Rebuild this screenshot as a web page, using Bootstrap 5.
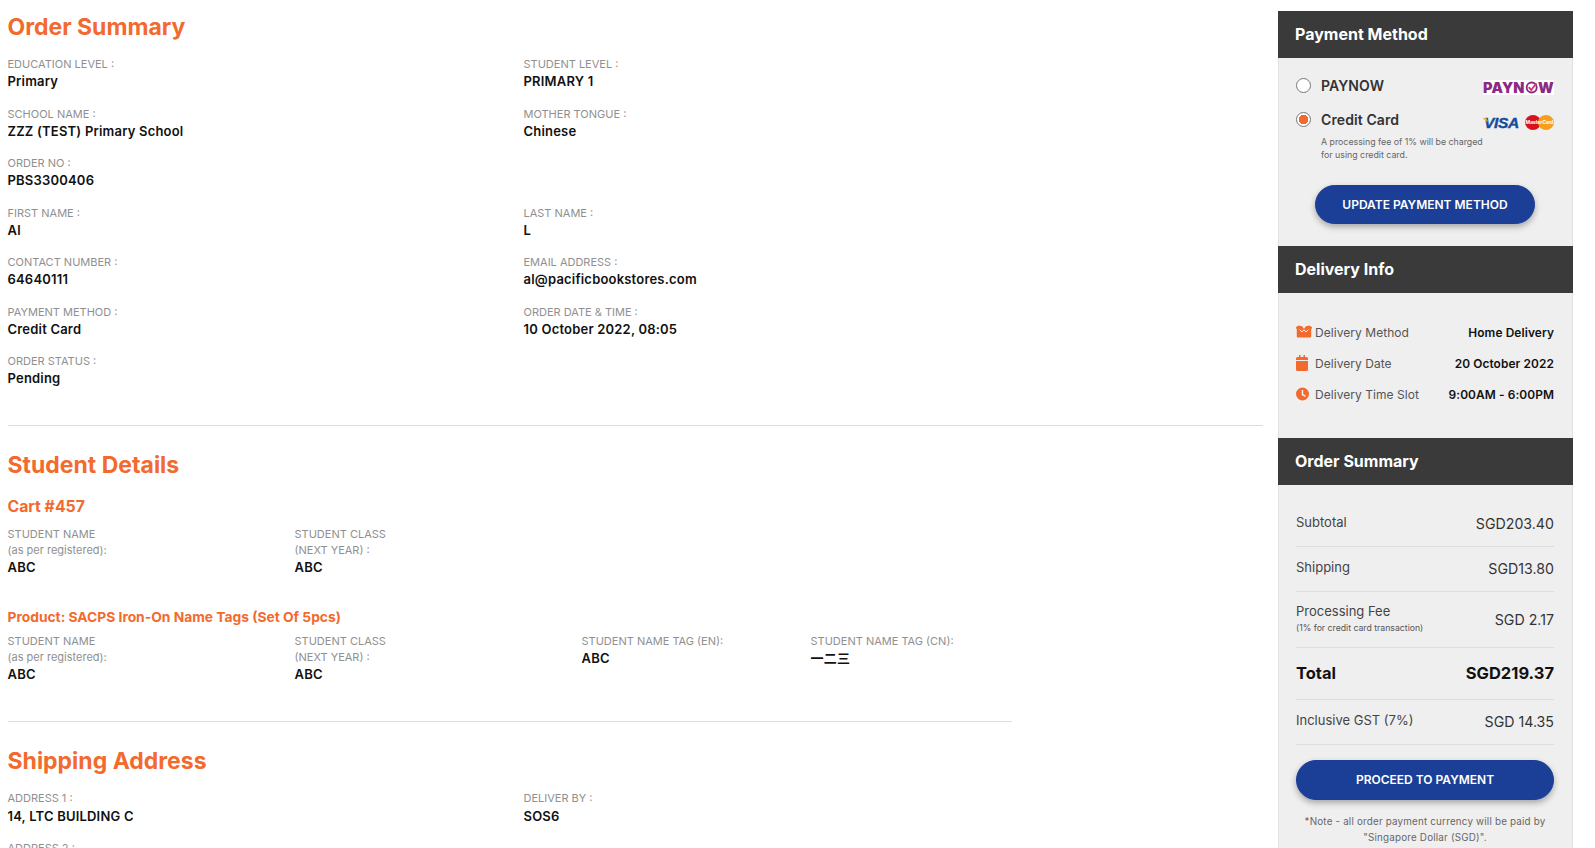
<!DOCTYPE html>
<html lang="en">
<head>
<meta charset="utf-8">
<title>Order Summary</title>
<link href="https://cdn.jsdelivr.net/npm/bootstrap@5.3.0/dist/css/bootstrap.min.css" rel="stylesheet">
<style>
html,body{background:#fff;font-family:Inter,"Noto Sans CJK SC",sans-serif;color:#111}
.page-wrap{width:1595px}
.main-col{width:1263px;padding-left:7.5px;flex:none}
.side-col{width:295px;margin:11px 0 0 15px;flex:none;background:#efefef;border-left:1px solid #e2e2e2;border-right:1px solid #e2e2e2;padding-bottom:20px}
.sec-title{font-size:23px;font-weight:700;color:#f26a2e;line-height:30px;margin:0}
.sub-title{font-weight:700;color:#f26a2e;margin:0}
.cart-title{font-size:15.8px;line-height:20px}
.prod-title{font-size:13.8px;line-height:18px}
.lbl{font-size:11px;line-height:16px;color:#909090}
.val{font-size:13px;line-height:18px;font-weight:600;color:#111;letter-spacing:.2px;margin-top:.4px}
.info-grid{display:grid;grid-template-columns:516px 1fr;grid-auto-rows:49.5px}
.stu-grid{display:grid;grid-template-columns:287px 287px 229px 1fr;width:1004px}
.rule-a{border-top:1px solid #ddd;height:0}
.rule-b{border-top:1px solid #ddd;height:0;width:1004px}
.side-head{background:#3a3a3a;color:#fff;height:47px;margin:0 -1px;padding:0 17px;font-size:16px;font-weight:700;line-height:47px}
.pay-body{height:188px;padding:0 18px 0 17px}
.pay-row{height:33px}
.pay-row .form-check-input{width:15px;height:15px;margin:0;flex:none;border:1px solid #777;background-color:#fff;background-image:none}
.pay-row .form-check-input:checked{background-color:#fff;border-color:#777;background-image:radial-gradient(circle,#f26a2e 0 4.5px,transparent 5px)}
.pay-name{font-size:14px;font-weight:600;color:#333;margin-left:10px;letter-spacing:.1px}
.pay-note{font-size:8.8px;line-height:13px;color:#666;margin:-1px 0 0 25px}
.logo-now{background:#fff;width:71px;height:15px;margin-top:4px;color:#8c2a82;font-size:14.5px;font-weight:900;line-height:15px;display:flex;align-items:center;justify-content:center;letter-spacing:.2px}
.logo-visa{position:relative;font-family:"Liberation Sans",sans-serif;font-style:italic;font-weight:700;font-size:15.500px;line-height:14px;color:#164a9a;letter-spacing:-.3px;-webkit-text-stroke:.4px #164a9a}
.logo-visa::before{content:"";position:absolute;left:-2px;top:2px;width:6px;height:5px;background:#f0a83a;clip-path:polygon(0 0,70% 0,100% 100%)}
.logo-mc{width:29px;height:15px;margin-left:6px;position:relative}
.mc-a,.mc-b{position:absolute;top:0;width:16px;height:15px;border-radius:50%}
.mc-a{left:0;background:#d8121d}
.mc-b{right:0;background:#f79e1b}
.mc-t{position:absolute;left:0;right:0;top:5px;font-size:5px;line-height:5px;text-align:center;color:#fff;font-weight:700;white-space:nowrap;letter-spacing:-.1px}
.act-btn{display:block;background:#1b3f97;color:#fff;border:1px solid #1b3f97;border-radius:20px;font-size:12px;font-weight:600;height:39px;line-height:37px;padding:0;text-align:center;box-shadow:0 3px 6px rgba(0,0,0,.3);text-decoration:none}
.btn-upd{width:220px;margin:24px auto 0 auto}
.btn-go{margin:15px 0 0;height:40px;line-height:37px}
.del-body{height:145px;padding:24px 18px 0 17px}
.del-row{height:31px;font-size:12px}
.del-lbl{color:#555;letter-spacing:.05px}
.del-val{font-size:11.900px;font-weight:600;color:#111;letter-spacing:.1px}
.del-ico{width:16px;height:16px;margin-right:3px;flex:none;fill:#f26a2e;position:relative;top:-1px}
.sum-body{padding:17px 18px 0 17px}
.sum-row{border-bottom:1px solid #dedede;color:#444}
.sum-l{font-size:13px;color:#444;margin-bottom:3px}
.sum-v{font-size:14.2px;color:#333}
.sum-s{font-size:8.7px;line-height:12px;color:#555;display:block}
.tot{font-size:16.5px;font-weight:700;color:#111}
.h-45{height:45px}
.h-56{height:56px}
.h-52{height:52px}
.note-txt{font-size:9.8px;line-height:15.500px;color:#666;text-align:center;margin:14px 0 0;letter-spacing:.2px}
</style>
</head>
<body>
<div class="page-wrap d-flex align-items-start">
  <main class="main-col">
    <h2 class="sec-title pt-2 mt-1">Order Summary</h2>
    <div class="info-grid" style="margin-top:14px">
      <div><div class="lbl">EDUCATION LEVEL :</div><div class="val">Primary</div></div>
      <div><div class="lbl">STUDENT LEVEL :</div><div class="val">PRIMARY 1</div></div>
      <div><div class="lbl">SCHOOL NAME :</div><div class="val">ZZZ (TEST) Primary School</div></div>
      <div><div class="lbl">MOTHER TONGUE :</div><div class="val">Chinese</div></div>
      <div><div class="lbl">ORDER NO :</div><div class="val">PBS3300406</div></div>
      <div></div>
      <div><div class="lbl">FIRST NAME :</div><div class="val">Al</div></div>
      <div><div class="lbl">LAST NAME :</div><div class="val">L</div></div>
      <div><div class="lbl">CONTACT NUMBER :</div><div class="val">64640111</div></div>
      <div><div class="lbl">EMAIL ADDRESS :</div><div class="val">al@pacificbookstores.com</div></div>
      <div><div class="lbl">PAYMENT METHOD :</div><div class="val">Credit Card</div></div>
      <div><div class="lbl">ORDER DATE &amp; TIME :</div><div class="val">10 October 2022, 08:05</div></div>
      <div><div class="lbl">ORDER STATUS :</div><div class="val">Pending</div></div>
      <div></div>
    </div>
    <div class="rule-a" style="margin-top:22px"></div>
    <h2 class="sec-title" style="margin-top:24px">Student Details</h2>
    <h3 class="sub-title cart-title" style="margin-top:17px">Cart #457</h3>
    <div class="stu-grid" style="margin-top:9px">
      <div><div class="lbl">STUDENT NAME<br>(as per registered):</div><div class="val">ABC</div></div>
      <div><div class="lbl">STUDENT CLASS<br>(NEXT YEAR) :</div><div class="val">ABC</div></div>
    </div>
    <h3 class="sub-title prod-title" style="margin-top:32px">Product: SACPS Iron-On Name Tags (Set Of 5pcs)</h3>
    <div class="stu-grid" style="margin-top:7px">
      <div><div class="lbl">STUDENT NAME<br>(as per registered):</div><div class="val">ABC</div></div>
      <div><div class="lbl">STUDENT CLASS<br>(NEXT YEAR) :</div><div class="val">ABC</div></div>
      <div><div class="lbl">STUDENT NAME TAG (EN):</div><div class="val">ABC</div></div>
      <div><div class="lbl">STUDENT NAME TAG (CN):</div><div class="val">一二三</div></div>
    </div>
    <div class="rule-b" style="margin-top:38px"></div>
    <h2 class="sec-title" style="margin-top:24px">Shipping Address</h2>
    <div class="info-grid" style="margin-top:14px">
      <div><div class="lbl">ADDRESS 1 :</div><div class="val">14, LTC BUILDING C</div></div>
      <div><div class="lbl">DELIVER BY :</div><div class="val">SOS6</div></div>
      <div><div class="lbl">ADDRESS 2 :</div><div class="val">-</div></div>
      <div></div>
    </div>
  </main>
  <aside class="side-col">
    <div class="side-head">Payment Method</div>
    <div class="pay-body">
      <div style="height:11px"></div>
      <div class="pay-row d-flex align-items-center">
        <input class="form-check-input mt-0" type="radio" name="pm" aria-label="PAYNOW">
        <span class="pay-name flex-grow-1">PAYNOW</span>
        <span class="logo-now">PAYN<svg width="15" height="15" viewBox="0 0 16 16"><circle cx="8" cy="8" r="6" fill="none" stroke="#8c2a82" stroke-width="2.200"/><path d="M4.500 7.500l3 3.500 6-8" fill="none" stroke="#d6336c" stroke-width="2.200"/></svg>W</span>
      </div>
      <div class="pay-row d-flex align-items-center" style="height:34px">
        <input class="form-check-input mt-0" type="radio" name="pm" checked aria-label="Credit Card">
        <span class="pay-name flex-grow-1">Credit Card</span>
        <span class="logo-visa" style="margin-top:7px">VISA</span>
        <span class="logo-mc" style="margin-top:7px"><i class="mc-a"></i><i class="mc-b"></i><span class="mc-t">MasterCard</span></span>
      </div>
      <p class="pay-note">A processing fee of 1% will be charged<br>for using credit card.</p>
      <a class="act-btn btn-upd" href="#">UPDATE PAYMENT METHOD</a>
    </div>
    <div class="side-head">Delivery Info</div>
    <div class="del-body">
      <div class="del-row d-flex align-items-center">
        <svg class="del-ico" viewBox="0 0 16 16"><path d="M0 3L3 1.500l3.500 1L8 5l1.500-2.500 3.500-1L16 3l-.8 3v6.500a1 1 0 0 1-1 1H1.800a1 1 0 0 1-1-1V6z"/><path d="M3.500 5.500L6 8l2-2.200L10 8l2.500-2.500" fill="none" stroke="#fff" stroke-width=".9"/></svg>
        <span class="del-lbl flex-grow-1">Delivery Method</span><span class="del-val">Home Delivery</span>
      </div>
      <div class="del-row d-flex align-items-center">
        <svg class="del-ico" viewBox="0 0 16 16"><path d="M3 0h1.500v2h3V0H9v2h1.500A1.500 1.500 0 0 1 12 3.500V5H0V3.500A1.500 1.500 0 0 1 1.500 2H3zM0 6h12v8.500a1.500 1.500 0 0 1-1.500 1.500h-9A1.500 1.500 0 0 1 0 14.500z"/></svg>
        <span class="del-lbl flex-grow-1">Delivery Date</span><span class="del-val">20 October 2022</span>
      </div>
      <div class="del-row d-flex align-items-center">
        <svg class="del-ico" viewBox="0 0 16 16"><path fill-rule="evenodd" d="M6.500 1.500a6.500 6.500 0 1 1 0 13 6.500 6.500 0 0 1 0-13zM5.700 4v5l3.500 2 .8-1.200-2.800-1.700V4z"/></svg>
        <span class="del-lbl flex-grow-1">Delivery Time Slot</span><span class="del-val">9:00AM - 6:00PM</span>
      </div>
    </div>
    <div class="side-head">Order Summary</div>
    <div class="sum-body">
      <div class="sum-row h-45 d-flex justify-content-between align-items-center"><span class="sum-l">Subtotal</span><span class="sum-v">SGD203.40</span></div>
      <div class="sum-row h-45 d-flex justify-content-between align-items-center"><span class="sum-l">Shipping</span><span class="sum-v">SGD13.80</span></div>
      <div class="sum-row h-56 d-flex justify-content-between align-items-center"><span class="sum-l">Processing Fee<span class="sum-s">(1% for credit card transaction)</span></span><span class="sum-v">SGD 2.17</span></div>
      <div class="sum-row h-52 d-flex justify-content-between align-items-center"><span class="tot">Total</span><span class="tot">SGD219.37</span></div>
      <div class="sum-row h-45 d-flex justify-content-between align-items-center"><span class="sum-l">Inclusive GST (7%)</span><span class="sum-v">SGD 14.35</span></div>
      <a class="act-btn btn-go" href="#">PROCEED TO PAYMENT</a>
      <p class="note-txt">*Note - all order payment currency will be paid by<br>"Singapore Dollar (SGD)".</p>
    </div>
  </aside>
</div>
<script src="https://cdn.jsdelivr.net/npm/bootstrap@5.3.0/dist/js/bootstrap.bundle.min.js"></script>
</body>
</html>
